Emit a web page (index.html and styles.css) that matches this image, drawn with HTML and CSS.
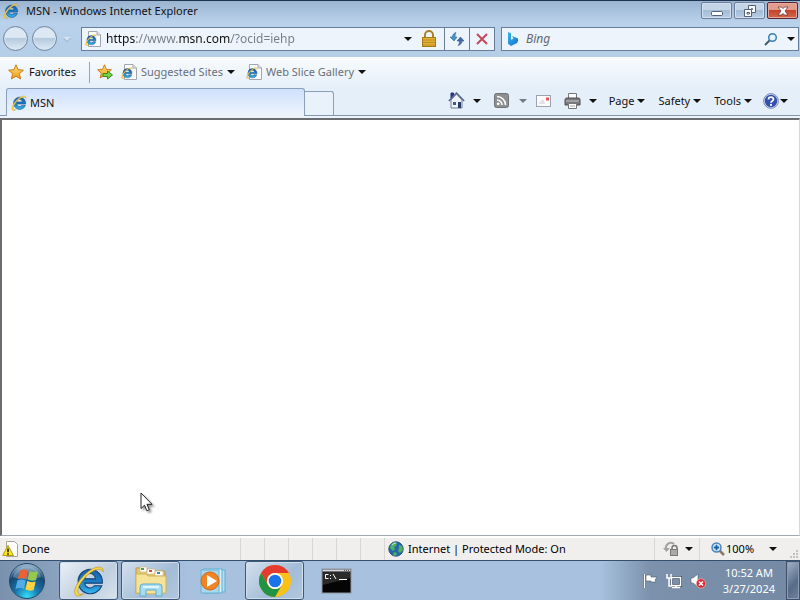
FILE: index.html
```html
<!DOCTYPE html>
<html lang="en">
<head>
    <meta charset="UTF-8">
    <meta name="viewport" content="width=device-width, initial-scale=1.0">
    <title>MSN - Windows Internet Explorer</title>
    <link rel="stylesheet" href="styles.css">
</head>
<body>

    <!-- Shared icons -->
    <svg class="sprite" width="0" height="0" aria-hidden="true">
        <defs>
            <linearGradient id="ieBlue" x1="0" y1="0" x2="0" y2="1">
                <stop offset="0" stop-color="#1c5fa8"/>
                <stop offset="0.5" stop-color="#1c7cc6"/>
                <stop offset="1" stop-color="#35b8ec"/>
            </linearGradient>
            <linearGradient id="gold" x1="0" y1="0" x2="0" y2="1">
                <stop offset="0" stop-color="#ffe27a"/>
                <stop offset="1" stop-color="#f29a12"/>
            </linearGradient>
            <linearGradient id="bingBlue" x1="0" y1="0" x2="1" y2="1">
                <stop offset="0" stop-color="#35b4ea"/>
                <stop offset="1" stop-color="#1573cf"/>
            </linearGradient>
            <radialGradient id="orbFill" cx="0.5" cy="0.95" r="0.9">
                <stop offset="0" stop-color="#35e0f5"/>
                <stop offset="0.4" stop-color="#1674ad"/>
                <stop offset="0.75" stop-color="#174872"/>
                <stop offset="1" stop-color="#8fb0cc"/>
            </radialGradient>
            <symbol id="ie" viewBox="1 1 30 30">
                <path d="M17 5a11.500 11.500 0 1 0 11 15.500h-7a5 5 0 0 1-9-2.500h16.500V17A11.500 11.500 0 0 0 17 5zM12 14a5 5 0 0 1 10 0z" fill="url(#ieBlue)" stroke="#134378"/>
                <path d="M29.500 7.500c0-7-8-5-14-.5C7.500 13 .5 24 3 28.500c1.500 2.500 5 1.500 8-.5-3.500 1-5.500.5-5.500-2.500 0-5 5.500-12.500 11.500-17 5-3.700 10-5 12.500-1z" fill="#f8d748" stroke="#b98f1d" stroke-width="0.600"/>
            </symbol>
            <symbol id="iePage" viewBox="0 0 16 16">
                <path d="M3.500 0.500h8.500l3.500 3.500v11.500h-12z" fill="#fdfdfd" stroke="#a3a7ad"/>
                <path d="M12 0.500v3.500h3.500" fill="#dde3ea" stroke="#a3a7ad"/>
                <use href="#ie" x="0" y="3" width="12" height="12"/>
            </symbol>
            <symbol id="star" viewBox="0 0 16 16">
                <path d="M8 0.800l2.100 4.900 5.300.5-4 3.500 1.200 5.200L8 12.200l-4.600 2.700 1.200-5.200-4-3.500 5.300-.5z" fill="url(#gold)" stroke="#c87d15" stroke-linejoin="round"/>
            </symbol>
        </defs>
    </svg>

    <header class="title-bar">
        <svg class="icon"><use href="#ie"/></svg>
        <h1 class="title">MSN - Windows Internet Explorer</h1>
        <div class="window-buttons">
            <button class="window-button" aria-label="Minimize">
                <svg width="14" height="12" viewBox="0 0 14 12"><rect x="1.500" y="6.500" width="11" height="4" rx="1" fill="#fff" stroke="#53617a"/></svg>
            </button>
            <button class="window-button" aria-label="Restore">
                <svg width="14" height="12" viewBox="0 0 14 12" fill="#fff" stroke="#53617a"><path d="M5.500 .5h7v7h-7z"/><path d="M8.500 3.500h1v1h-1z"/><path d="M1.500 4.500h7v7h-7z"/><path d="M4 7.500h2.500v1.500H4z"/></svg>
            </button>
            <button class="window-button close" aria-label="Close">
                <svg width="14" height="12" viewBox="0 0 14 12"><path d="M2 2h3.500L7 3.600 8.500 2H12L9 6l3 4H8.500L7 8.400 5.500 10H2l3-4z" fill="#fff" stroke="#6b3a3c" stroke-width="0.800"/></svg>
            </button>
        </div>
    </header>

    <nav class="nav-bar">
        <button class="round" aria-label="Back"></button>
        <button class="round" aria-label="Forward"></button>
        <button class="plain history" aria-label="Recent pages"><span class="arrow pale"></span></button>
        <div class="address">
            <svg class="icon"><use href="#iePage"/></svg>
            <input class="url" type="text" aria-label="Address" value="https://www.msn.com/?ocid=iehp">
            <button class="plain" aria-label="Show addresses"><span class="arrow"></span></button>
            <button class="plain lock" aria-label="Security report">
                <svg width="16" height="18" viewBox="0 0 16 18"><path d="M4 8V5a4 4 0 0 1 8 0v3" fill="none" stroke="#a98224" stroke-width="2"/><rect x="1.500" y="7.500" width="13" height="9" fill="#e5b136" stroke="#a47a15"/><path d="M2 10h12M2 12.500h12M2 15h12" stroke="#bb8d20"/></svg>
            </button>
            <button class="plain address-button" aria-label="Refresh">
                <svg width="16" height="16" viewBox="0 0 16 16"><path d="M7 1.500C4.500 2 3.500 4 3.500 6H1l4 4 3-4H6C6 4 6.500 2.500 7 1.500z" fill="#4a91c5" stroke="#31689b" stroke-width="0.600"/><path d="M9 14.500c2.500-.5 4-2.500 4-4.500h2l-3.500-4L8 10h2.500c0 2-.5 3.500-1.500 4.500z" fill="#4468a8" stroke="#30548e" stroke-width="0.600"/></svg>
            </button>
            <button class="plain address-button" aria-label="Stop">
                <svg width="14" height="14" viewBox="0 0 14 14"><path d="M2 2l10 10M12 2L2 12" stroke="#c3495a" stroke-width="2"/></svg>
            </button>
        </div>
        <div class="search">
            <svg width="12" height="16" viewBox="0 0 12 16"><path d="M1 1l3 1.200v6.600l2.500-1L5 5l6 2.500q.8 3-1 4.500L4 15l-3-2.200z" fill="url(#bingBlue)"/></svg>
            <input class="search-text" type="text" aria-label="Search" placeholder="Bing">
            <button class="plain" aria-label="Search the web">
                <svg width="14" height="14" viewBox="0 0 14 14"><path d="M6 8l-5 5" stroke="#3e5c70" stroke-width="2"/><circle cx="8.500" cy="5.500" r="3.800" fill="#e3f3fd" stroke="#397fae" stroke-width="1.500"/></svg>
            </button>
            <button class="plain search-menu" aria-label="Search options"><span class="arrow"></span></button>
        </div>
    </nav>

    <div class="favorites-bar">
        <button class="plain favorites"><svg class="icon"><use href="#star"/></svg>Favorites</button>
        <span class="divider"></span>
        <button class="plain add" aria-label="Add to Favorites Bar">
            <svg class="icon" viewBox="0 0 16 16"><use href="#star" width="15" height="15"/><path d="M6 9.500h4.500V7L15.500 11l-5 4v-2.500H6z" fill="#73d445" stroke="#368c22"/></svg>
        </button>
        <button class="plain link"><svg class="icon"><use href="#iePage"/></svg>Suggested Sites<span class="arrow"></span></button>
        <button class="plain link"><svg class="icon"><use href="#iePage"/></svg>Web Slice Gallery<span class="arrow"></span></button>
    </div>

    <div class="tab-bar">
        <button class="tab"><svg class="icon"><use href="#ie"/></svg>MSN</button>
        <button class="new-tab" aria-label="New Tab"></button>
        <div class="commands">
            <button class="plain command home" aria-label="Home">
                <svg width="17" height="17" viewBox="0 0 17 17"><path d="M3 1h2.500v5H3z" fill="#35358e" stroke="#282870"/><path d="M3 8l5.500-6L14 8v8H3z" fill="#eef2f8" stroke="#6f7c96"/><path d="M.8 9L8.500 1l7.700 8" fill="none" stroke="#586a94" stroke-width="1.500"/><path d="M5 10h3v3H5z" fill="#3e5b85"/><path d="M10 10h3v6h-3z" fill="#253c66"/></svg>
                <span class="arrow"></span>
            </button>
            <button class="plain command feeds" aria-label="Feeds">
                <svg width="15" height="15" viewBox="0 0 15 15"><rect x="0.500" y="0.500" width="14" height="14" rx="2" fill="#8d8f91" stroke="#707274"/><g fill="none" stroke="#fff" stroke-width="1.600"><path d="M3 7a5 5 0 0 1 5 5M3 3.500A8.500 8.500 0 0 1 11.500 12"/></g><circle cx="4.200" cy="10.800" r="1.400" fill="#fff"/></svg>
                <span class="arrow dim"></span>
            </button>
            <button class="plain command" aria-label="Read Mail">
                <svg width="15" height="12" viewBox="0 0 15 12"><rect x="0.500" y="0.500" width="14" height="11" fill="#fafafa" stroke="#9ba2b0"/><path d="M10 2.500h3v3h-3z" fill="#df5458"/><path d="M3 8h6M5 6h3" stroke="#c3c9d5"/></svg>
            </button>
            <button class="plain command print" aria-label="Print">
                <svg width="17" height="16" viewBox="0 0 17 16"><path d="M4.500 5V.5h8V5" fill="#fff" stroke="#777"/><path d="M1 6.500Q1 5 3 5h11q2 0 2 1.500V12H1z" fill="#77797c" stroke="#4f5154"/><path d="M2 8h13" stroke="#c5c7c9"/><path d="M4.500 10.500h8v5h-8z" fill="#fafafa" stroke="#777"/><path d="M6 13h5" stroke="#aaa"/></svg>
                <span class="arrow"></span>
            </button>
            <button class="plain command">Page<span class="arrow"></span></button>
            <button class="plain command">Safety<span class="arrow"></span></button>
            <button class="plain command">Tools<span class="arrow"></span></button>
            <button class="plain command help" aria-label="Help">
                <svg width="16" height="16" viewBox="0 0 16 16"><circle cx="8" cy="8" r="7.400" fill="#cfd8ee" stroke="#7f8db8"/><circle cx="8" cy="8" r="6.200" fill="#3150ae"/><path d="M5.500 6.500C5.500 3.500 10.500 3.500 10.500 6.300 10.500 8 8 8 8 9.800" fill="none" stroke="#fff" stroke-width="1.800"/><circle cx="8" cy="11.900" r="1.100" fill="#fff"/></svg>
                <span class="arrow"></span>
            </button>
        </div>
    </div>

    <main class="page"></main>

    <footer class="status-bar">
        <div class="status-text">
            <svg class="icon" viewBox="0 0 16 16"><path d="M4.500 .5h8l3 3v12h-11z" fill="#fff" stroke="#aaa690"/><path d="M6 4.500l5.500 10H.7z" fill="#ffe719" stroke="#b49b10" stroke-linejoin="round"/><path d="M6 7.500v3.800M6 12.200v1.500" stroke="#111" stroke-width="1.500"/></svg>
            <span>Done</span>
        </div>
        <span class="cell"></span>
        <span class="cell"></span>
        <span class="cell"></span>
        <span class="cell"></span>
        <span class="cell"></span>
        <span class="cell"></span>
        <div class="zone">
            <svg class="icon" viewBox="0 0 16 16"><circle cx="8" cy="8" r="7.200" fill="#2468ad" stroke="#28527f"/><path d="M3 3q4-3 6-1L8 5 6 6l1 2-2 2-3-3zM11 4l3 1 1 4-3 3-2-2 1-3zM6 11l3 1-1 3-3-1z" fill="#50b25a"/><path d="M4 4q2-2 4-2" fill="none" stroke="#c0e6ef"/></svg>
            <span>Internet | Protected Mode: On</span>
        </div>
        <button class="plain privacy" aria-label="InPrivate Filtering">
            <svg class="icon" viewBox="0 0 16 16"><path d="M3 8a5 5 0 0 1 8-5" fill="none" stroke="#a2a2a2" stroke-width="2"/><path d="M0 7h7l-3.500 4z" fill="#a2a2a2"/><path d="M9 9V7a2.500 2.500 0 0 1 5 0v2" fill="none" stroke="#777" stroke-width="1.500"/><rect x="7.500" y="8.500" width="7" height="6" fill="#aaa" stroke="#777"/></svg>
            <span class="arrow"></span>
        </button>
        <button class="plain zoom">
            <svg width="14" height="14" viewBox="0 0 14 14"><path d="M8 8l5 5" stroke="#8b7961" stroke-width="2.500"/><circle cx="5.500" cy="5.500" r="4.500" fill="#d9eefb" stroke="#4b83b8" stroke-width="1.500"/><path d="M5.500 2.800v5.400M2.800 5.500h5.400" stroke="#1660a8" stroke-width="1.800"/></svg>
            <span>100%</span>
            <span class="arrow"></span>
        </button>
        <svg class="grip" width="10" height="9" viewBox="0 0 10 9" fill="#c2c2c2"><path d="M6 0h2v2H6zM3 3h2v2H3zM6 3h2v2H6zM0 6h2v2H0zM3 6h2v2H3zM6 6h2v2H6z"/></svg>
    </footer>

    <div class="taskbar">
        <button class="plain start" aria-label="Start">
            <svg width="38" height="38" viewBox="0 0 38 38">
                <circle cx="19" cy="19" r="17.500" fill="url(#orbFill)" stroke="#274667"/>
                <path d="M5 15a14.500 14.500 0 0 1 28 0q-14 5-28 0z" fill="#fff" opacity="0.250"/>
                <path d="M12 8.500q4-2 8 0L18.200 17q-4-2-8.400 0z" fill="#ec6132"/>
                <path d="M21.500 9q4 2 8.500.3L28 18q-4 1.500-8.300-.5z" fill="#96c84e"/>
                <path d="M9.400 18.500q4-2 8.400 0L16 27q-4-2-8.500 0z" fill="#53aee8"/>
                <path d="M19.300 19q4 2 8.300.5L25.700 28q-4 1.500-8.300-.5z" fill="#ffd33d"/>
            </svg>
        </button>
        <button class="task open active" aria-label="Internet Explorer"><svg width="32" height="32"><use href="#ie"/></svg></button>
        <button class="task open" aria-label="Windows Explorer">
            <svg width="32" height="32" viewBox="0 0 32 32"><path d="M1 3h11l1 3h17v22H1z" fill="#e4c76b" stroke="#b69a48"/><path d="M5 2h7v5H5zM12 4h8v5h-8zM20 6h8v5h-8z" fill="#fff" stroke="#c9b983" stroke-width="0.700"/><path d="M6 3h3v2H6z" fill="#49a04d"/><path d="M14 5h3v2h-3z" fill="#d34b42"/><path d="M22 7h3v2h-3z" fill="#3c83c8"/><path d="M1 9h10l2 2h18v17q-15 2-30 0z" fill="#f6e39a" stroke="#cfb45b"/><path d="M5 31v-9q0-3 3-3h16q3 0 3 3v9h-6v-6H11v6z" fill="#a5dcf1" stroke="#62abc9"/><path d="M8 22h16" stroke="#e1f5fc" stroke-width="2"/></svg>
        </button>
        <button class="task" aria-label="Windows Media Player">
            <svg width="32" height="32" viewBox="0 0 32 32"><path d="M9 5h19v22H9z" fill="#b5def2" stroke="#5faed1"/><path d="M6 4h19v24H6z" fill="#d6effa" stroke="#5faed1"/><path d="M4 5h18v23H4z" fill="#a8d8ee" stroke="#6bb4d3"/><circle cx="13" cy="16" r="9" fill="#ee8424" stroke="#d56612"/><path d="M10 10l10 6-10 6z" fill="#fff"/></svg>
        </button>
        <button class="task open" aria-label="Google Chrome">
            <svg width="32" height="32" viewBox="0 0 32 32"><circle cx="16" cy="16" r="16" fill="#fbc116"/><path d="M2.140 8A16 16 0 0 1 29.860 8H16a8 8 0 0 0-6.930 12z" fill="#e33b2e"/><path d="M2.140 8A16 16 0 0 0 16 32l6.930-12A8 8 0 0 1 9.070 20z" fill="#229342"/><circle cx="16" cy="16" r="8" fill="#fff"/><circle cx="16" cy="16" r="6.300" fill="#1a73e8"/></svg>
        </button>
        <button class="task" aria-label="Command Prompt">
            <svg width="32" height="26" viewBox="0 0 32 26"><rect x="1" y="1" width="29" height="24" fill="#050505" stroke="#8f969e"/><path d="M1.500 1.500h28v2h-28z" fill="#d8dade"/><path d="M23 2.500h1M25 2.500h1M27 2.500h1" stroke="#555"/><path d="M1.500 4h28v6l-28 7z" fill="#fff" opacity="0.150"/><path d="M7.500 6.500h-3v4h3M9.500 7v1M9.500 10v1M12 6l3 5M18 11.500h8" fill="none" stroke="#fff"/></svg>
        </button>
        <div class="tray">
            <button class="plain" aria-label="Action Center"><svg class="icon" viewBox="0 0 16 16"><path d="M2.500 1v14" stroke="#4d5b70" stroke-width="3"/><path d="M2.500 1v14" stroke="#fff" stroke-width="1.500"/><path d="M4 2h5v2h6l-2 3 1 2H9V8H4z" fill="#fff" stroke="#4d5b70" stroke-width="0.600"/></svg></button>
            <button class="plain" aria-label="Network"><svg class="icon" viewBox="0 0 16 16" fill="none" stroke="#fff"><path d="M5.500 4.500h9v8h-9z" stroke="#3f506a" stroke-width="3"/><path d="M5.500 4.500h9v8h-9zM10 13v2M6 14.500h8" stroke-width="1.500"/><path d="M1 1v4h4V1M3 5v8h3" stroke-width="1.500"/></svg></button>
            <button class="plain" aria-label="Volume"><svg class="icon" viewBox="0 0 16 16"><path d="M1 5h2l5-4v13l-5-4H1z" fill="#fff" stroke="#536179" stroke-width="0.600"/><circle cx="11" cy="10.500" r="4.700" fill="#d92c34" stroke="#f2c5c7" stroke-width="0.600"/><path d="M9 8.500l4 4M13 8.500l-4 4" stroke="#fff" stroke-width="1.500"/></svg></button>
        </div>
        <div class="clock">
            <time datetime="10:52">10:52 AM</time>
            <time datetime="2024-03-27">3/27/2024</time>
        </div>
        <button class="show-desktop" aria-label="Show desktop"></button>
    </div>

    <!-- Mouse pointer -->
    <svg class="pointer" width="14" height="22" viewBox="0 0 14 22"><path d="M1 1v15.500l3.500-3.300 2.300 5.500 2.500-1-2.300-5.400h5z" fill="#fff" stroke="#222"/></svg>

</body>
</html>
```
FILE: styles.css
```css
* {
    box-sizing: border-box;
}
body {
    margin: 0;
    height: 100vh;
    display: flex;
    flex-direction: column;
    overflow: hidden;
    font-family: "Noto Sans", "Open Sans", sans-serif;
    font-size: 11px;
    line-height: 16px;
    color: #111;
    background: #eef4fb;
}
button, input {
    font: inherit;
    color: inherit;
}
button {
    padding: 0;
    white-space: nowrap;
}
svg {
    display: block;
    flex: none;
}
.sprite {
    position: absolute;
}
.icon {
    width: 16px;
    height: 16px;
}
.plain {
    display: flex;
    align-items: center;
    border: 0;
    background: none;
}
.arrow {
    width: 0;
    border: 4px solid transparent;
    border-top-color: #111;
    border-bottom: 0;
}
.arrow.dim {
    border-top-color: #747b86;
}
.arrow.pale {
    border-top-color: #d3e2f3;
    filter: drop-shadow(0 1px 0 #8ba6c6);
}

/* Title bar */
.title-bar {
    display: flex;
    align-items: center;
    height: 22px;
    padding: 0 2px 2px 3px;
    border-top: 1px solid #1e3350;
    background: linear-gradient(#9bb4d0, #b9d1ea);
}
.title {
    flex: 1;
    margin: 0 0 0 7px;
    font-size: 11px;
    font-weight: normal;
}
.window-buttons {
    display: flex;
    gap: 2px;
}
.window-button {
    display: flex;
    align-items: center;
    justify-content: center;
    width: 31px;
    height: 17px;
    border: 1px solid #6b7f9c;
    border-radius: 2px;
    background: linear-gradient(#c5d5e8 45%, #a5bbd6 50%, #b9cde4);
    box-shadow: inset 0 0 0 1px #d3e0ef;
}
.window-button.close {
    border-color: #5b2630;
    background: linear-gradient(#e29c8c 45%, #c5422b 50%, #d4684a);
    box-shadow: inset 0 0 0 1px #e6a699;
}

/* Address and search */
.nav-bar {
    display: flex;
    align-items: center;
    height: 35px;
    padding: 0 1px 2px 3px;
    background: linear-gradient(#b9d1ea, #b5cee8);
}
.round {
    width: 25px;
    height: 25px;
    margin-right: 4px;
    border: 1px solid #71869f;
    border-radius: 50%;
    background: linear-gradient(#dce8f3 45%, #b6cade 50%, #dceaf5);
    box-shadow: inset 0 0 0 1px #d6e4f0;
}
.history {
    width: 20px;
    padding-right: 8px;
    justify-content: center;
}
.address, .search {
    display: flex;
    align-items: center;
    height: 24px;
    border: 1px solid #677d99;
    background: #edf4fc;
    font-size: 12px;
}
.address {
    flex: 1;
    padding-left: 3px;
}
.url, .search-text {
    flex: 1;
    min-width: 0;
    padding: 0;
    border: 0;
    outline: 0;
    background: none;
}
/* The scheme and the domain stand out from the rest of the address */
.url {
    margin-left: 5px;
    background: linear-gradient(90deg, #111 30px, #747b84 30px 73px, #111 73px 125px, #747b84 125px);
    -webkit-background-clip: text;
    background-clip: text;
    -webkit-text-fill-color: transparent;
}
.lock {
    padding: 0 7px 0 9px;
}
.address-button {
    align-self: stretch;
    justify-content: center;
    width: 25px;
    border-left: 1px solid #677d99;
}
.search {
    flex: 0 1 298px;
    margin-left: 6px;
    padding: 0 3px 0 5px;
}
.search-text {
    margin-left: 7px;
    font-style: italic;
}
.search-text::placeholder {
    color: #62676e;
}
.search-menu {
    margin-left: 9px;
}

/* Favorites */
.favorites-bar {
    display: flex;
    align-items: center;
    height: 31px;
    padding: 0 0 2px 8px;
    border-top: 1px solid #fff;
    background: linear-gradient(#f8fbfe, #e5eff9);
}
.favorites {
    gap: 5px;
}
.divider {
    width: 1px;
    height: 21px;
    margin: 0 7px 0 13px;
    background: #94a5ba;
}
.add {
    margin-right: 8px;
}
.link {
    gap: 4px;
    margin-right: 11px;
    color: #696f78;
}

/* Tabs and commands */
.tab-bar {
    display: flex;
    align-items: flex-end;
    height: 28px;
    padding-left: 6px;
    border-bottom: 1px solid #8296ad;
    background: #e5eff9;
}
.tab {
    display: flex;
    align-items: center;
    gap: 3px;
    flex: 0 1 299px;
    height: 28px;
    margin-bottom: -1px;
    padding-left: 4px;
    border: 1px solid #8ba0b8;
    border-bottom: 0;
    border-radius: 3px 3px 0 0;
    background: linear-gradient(#cfe0fd, #eef4fb);
}
.new-tab {
    width: 29px;
    height: 24px;
    border: 1px solid #8ba0b8;
    border-left: 0;
    border-bottom: 0;
    border-radius: 0 3px 0 0;
    background: #e9f1fa;
}
.commands {
    display: flex;
    align-items: center;
    align-self: center;
    gap: 13px;
    margin-left: auto;
    padding: 0 12px 2px 0;
}
.command {
    gap: 3px;
}
.home, .print {
    gap: 8px;
}
.feeds {
    gap: 10px;
    margin-right: -4px;
}
.print {
    margin-right: -1px;
}
.help {
    gap: 1px;
    margin-left: -2px;
}

/* Page */
.page {
    flex: 1;
    margin-top: 2px;
    border: 1px solid #d5d8dc;
    border-top: 2px solid #696c70;
    border-left: 2px solid #696c70;
    border-bottom-color: #a2a8b0;
    background: #fff;
}

/* Status bar */
.status-bar {
    display: flex;
    align-items: center;
    height: 24px;
    border-top: 2px solid #fff;
    background: #f1efee;
    color: #000;
}
.status-text {
    display: flex;
    align-items: center;
    flex: 1;
    gap: 4px;
    padding-left: 2px;
}
.cell {
    align-self: stretch;
    width: 24px;
    border-left: 1px solid #d9d6d4;
}
.zone, .privacy, .zoom {
    display: flex;
    align-items: center;
    align-self: stretch;
    border-left: 1px solid #d9d6d4;
}
.zone {
    width: 270px;
    gap: 4px;
    padding-left: 3px;
}
.privacy {
    width: 45px;
    gap: 6px;
    padding-left: 8px;
}
.zoom {
    width: 91px;
    gap: 1px;
    padding-left: 11px;
}
.zoom .arrow {
    margin-left: auto;
    margin-right: 13px;
}
.grip {
    align-self: flex-end;
    margin-bottom: 1px;
}

/* Taskbar */
.taskbar {
    display: flex;
    align-items: stretch;
    gap: 3px;
    height: 40px;
    border-top: 1px solid #35506f;
    background: linear-gradient(90deg, #7a91ad, #8ba3bf 60px, #a7c1de 190px, #a7c1de 600px, #7c91ac 650px, #7489a4);
}
.start {
    width: 56px;
    padding-left: 8px;
}
.task {
    display: flex;
    align-items: center;
    justify-content: center;
    width: 59px;
    border: 1px solid transparent;
    border-radius: 3px;
    background: none;
}
.task.open {
    border-color: #3f5875;
    background: linear-gradient(135deg, #d4e1ee, #a3bcd7 60%, #b1c8df);
    box-shadow: inset 0 0 0 1px #d0deec;
}
.task.active {
    background: linear-gradient(135deg, #eaf0f7, #bfcede 60%, #d9e3ed);
}
.tray {
    display: flex;
    align-items: center;
    gap: 8px;
    margin-left: auto;
    margin-right: 14px;
}
.clock {
    display: flex;
    flex-direction: column;
    align-items: center;
    justify-content: center;
    margin-right: 8px;
    color: #fff;
}
.show-desktop {
    width: 14px;
    border: 1px solid #3e506a;
    background: linear-gradient(135deg, #a4b4c8, #566b87 60%, #71849e);
    box-shadow: inset 0 0 0 1px #8b9db5;
}

/* The pointer lies over the page */
.pointer {
    position: absolute;
    left: 140px;
    top: 492px;
    filter: drop-shadow(2px 2px 1px rgba(0, 0, 0, 0.4));
}
```
